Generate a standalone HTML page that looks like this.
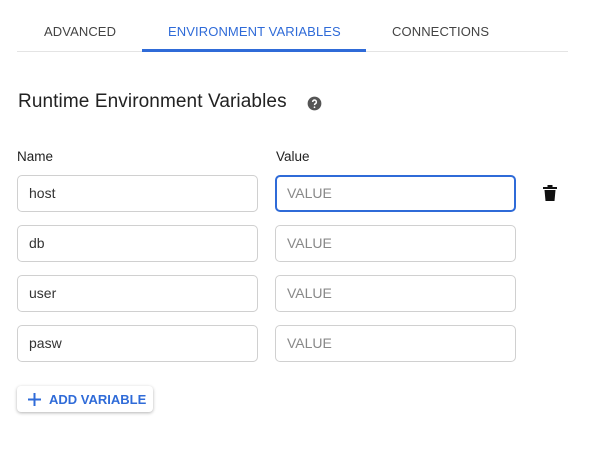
<!DOCTYPE html>
<html><head><style>
body{margin:0;width:600px;height:454px;background:#fff;font-family:"Liberation Sans",sans-serif;position:relative;overflow:hidden}
.a{position:absolute}
.tab{position:absolute;top:24px;font-size:13px;color:#444;letter-spacing:.1px}
.in{position:absolute;border:1px solid #d0d0d0;border-radius:5px;box-sizing:border-box;height:37px;font-size:14px;line-height:35px;padding-left:11px;color:#333}
.v{left:275px;width:241px;color:#888}
.n{left:17px;width:241px}
.lab{position:absolute;top:149px;font-size:13.5px;color:#222}
</style></head><body>
<div class="tab" style="left:44px">ADVANCED</div>
<div class="tab" style="left:168px;color:#2f6bd8">ENVIRONMENT VARIABLES</div>
<div class="tab" style="left:392px">CONNECTIONS</div>
<div class="a" style="left:17px;top:51px;width:551px;height:1px;background:#e4e4e4"></div>
<div class="a" style="left:142px;top:49px;width:224px;height:3px;background:#2f6bd8"></div>
<div class="a" style="left:18px;top:91px;font-size:19px;color:#222;letter-spacing:.1px">Runtime Environment Variables</div>
<svg class="a" style="left:307px;top:96px" width="15" height="15" viewBox="0 0 24 24"><circle cx="12" cy="12" r="11" fill="#555"/><path d="M9 9.5a3 3 0 1 1 4.5 2.6c-1 .6-1.5 1.1-1.5 2.4" stroke="#fff" stroke-width="2.4" fill="none"/><circle cx="12" cy="18" r="1.4" fill="#fff"/></svg>
<div class="lab" style="left:17px">Name</div>
<div class="lab" style="left:276px">Value</div>
<div class="in n" style="top:175px">host</div>
<div class="in v" style="top:175px;border:2px solid #2f6bd8;line-height:33px;padding-left:10px">VALUE</div>
<svg class="a" style="left:543px;top:185px" width="14" height="16" viewBox="0 0 14 16"><rect x="0" y="2" width="14" height="2" fill="#111"/><rect x="4.5" y="0" width="5" height="2" fill="#111"/><path d="M1.5 5h11l-1 11h-9z" fill="#111"/></svg>
<div class="in n" style="top:225px">db</div><div class="in v" style="top:225px">VALUE</div>
<div class="in n" style="top:275px">user</div><div class="in v" style="top:275px">VALUE</div>
<div class="in n" style="top:325px">pasw</div><div class="in v" style="top:325px">VALUE</div>
<div class="a" style="left:17px;top:386px;width:136px;height:26px;border-radius:4px;box-shadow:0 1px 3px rgba(0,0,0,.3);color:#2f6bd8;font-size:13px;font-weight:bold;line-height:27px">
<svg class="a" style="left:11px;top:7px" width="13" height="13" viewBox="0 0 13 13"><path d="M6.5 0v13M0 6.5h13" stroke="#2f6bd8" stroke-width="2"/></svg><span style="position:absolute;left:32px">ADD VARIABLE</span></div>
</body></html>
